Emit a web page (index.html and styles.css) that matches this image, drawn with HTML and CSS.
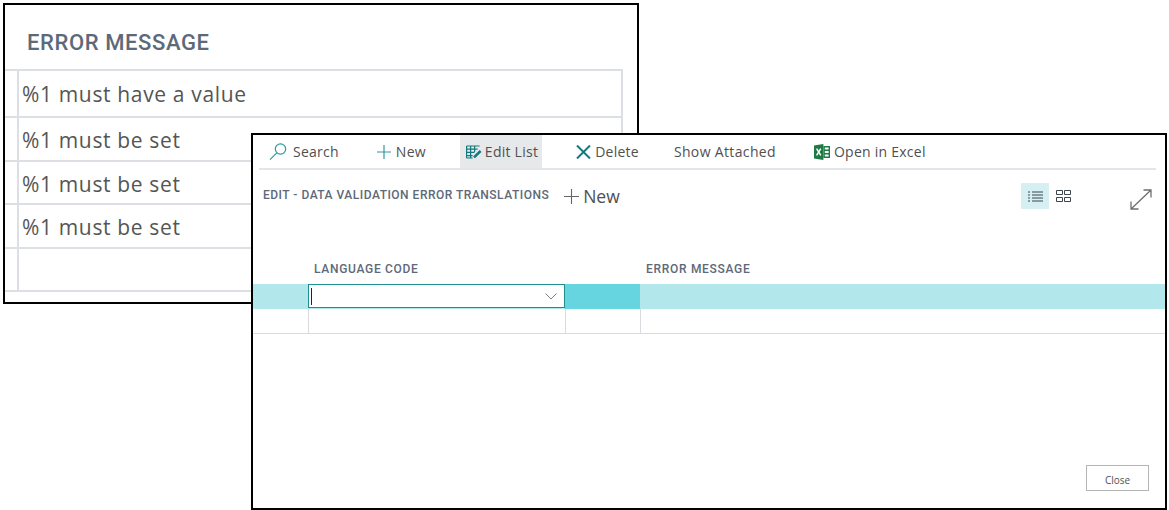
FILE: index.html
```html
<!DOCTYPE html>
<html lang="en">
<head>
    <meta charset="UTF-8">
    <title>Data Validation Error Translations</title>
    <link rel="stylesheet" href="styles.css">
</head>
<body>
    <section class="window back">
        <h2 class="back-title">ERROR MESSAGE</h2>
        <div class="back-table">
            <div class="back-row first">%1 must have a value</div>
            <div class="back-row">%1 must be set</div>
            <div class="back-row">%1 must be set</div>
            <div class="back-row">%1 must be set</div>
            <div class="back-row"></div>
        </div>
    </section>

    <section class="window front">
        <nav class="toolbar">
            <a class="tool tool-search">
                <svg width="19" height="19" viewBox="0 0 19 19" fill="none" stroke="#2f9a9c" stroke-width="1.2"><circle cx="11.5" cy="7" r="5.2"/><path d="M7.8 10.8 1 17.6"/></svg>
                <span>Search</span>
            </a>
            <a class="tool tool-new">
                <svg width="16" height="16" viewBox="0 0 16 16" fill="none" stroke="#2f9a9c" stroke-width="1.2"><path d="M8 1v14M1 8h14"/></svg>
                <span>New</span>
            </a>
            <a class="tool tool-edit">
                <svg width="16" height="14" viewBox="0 0 16 14" fill="none" stroke="#14787c" stroke-width="1.2"><path d="M.6 1h13M.6 4.2h11M.6 7.4h8M.6 10.6h6M.6 13h6M.6 1v12M4.6 1v12M8.6 1v6"/><path d="M8 12.4l6.6-6.4" stroke-width="2.6"/></svg>
                <span>Edit List</span>
            </a>
            <a class="tool tool-delete">
                <svg width="15" height="14" viewBox="0 0 15 14" fill="none" stroke="#14787c" stroke-width="2"><path d="M1 .5l13 13M14 .5l-13 13"/></svg>
                <span>Delete</span>
            </a>
            <a class="tool tool-attached"><span>Show Attached</span></a>
            <a class="tool tool-excel">
                <svg width="16" height="16" viewBox="0 0 16 16"><path d="M0 1.6 9.4 0v16L0 14.4z" fill="#1f7a45"/><path d="M9.4 2H16v12H9.4z" fill="#1f7a45"/><path d="M10.8 3.6h3.8v2h-3.800zM10.8 7h3.8v2h-3.800zM10.8 10.4h3.8v2h-3.800z" fill="#fff"/><path d="M2.6 4.6 6.8 11.4M6.8 4.6 2.6 11.4" stroke="#fff" stroke-width="1.5"/></svg>
                <span>Open in Excel</span>
            </a>
        </nav>

        <div class="titlebar">
            <h3 class="page-title">EDIT - DATA VALIDATION ERROR TRANSLATIONS</h3>
            <a class="title-new">
                <svg width="15" height="15" viewBox="0 0 15 15" fill="none" stroke="#666" stroke-width="1.1"><path d="M7.5 0v15M0 7.5h15"/></svg>
                <span>New</span>
            </a>
            <div class="view-switch">
                <span class="view-btn active">
                    <svg width="15" height="11" viewBox="0 0 15 11" fill="none" stroke="#3c4650"><path d="M0 1h2M4 1h11M0 4h2M4 4h11M0 7h2M4 7h11M0 10h2M4 10h11"/></svg>
                </span>
                <span class="view-btn">
                    <svg width="15" height="12" viewBox="0 0 15 12" fill="none" stroke="#3c4650"><path d="M.5.5h6v4h-6zM8.5.5h6v4h-6zM.5 7.5h6v4h-6zM8.5 7.5h6v4h-6z"/></svg>
                </span>
            </div>
            <svg class="expand" width="22" height="21" viewBox="0 0 22 21" fill="none" stroke="#6f6f6f" stroke-width="1.3"><path d="M1 20 21 1M13.500 1H21v7.500M1 12.500V20h7.500"/></svg>
        </div>

        <div class="grid">
            <div class="head"></div>
            <div class="head">LANGUAGE CODE</div>
            <div class="head"></div>
            <div class="head">ERROR MESSAGE</div>

            <div class="cell selected"></div>
            <div class="cell selected">
                <div class="combo">
                    <span class="caret"></span>
                    <svg width="12" height="7" viewBox="0 0 12 7" fill="none" stroke="#7d7d7d"><path d="M.5.5 6 6l5.500-5.500"/></svg>
                </div>
            </div>
            <div class="cell active"></div>
            <div class="cell selected"></div>

            <div class="cell"></div>
            <div class="cell divided"></div>
            <div class="cell divided"></div>
            <div class="cell divided"></div>
        </div>

        <div class="footer">
            <button class="close-btn">Close</button>
        </div>
    </section>
</body>
</html>
```

FILE: styles.css
```css
body {
    margin: 0;
    background-color: #fff;
    font-family: "Open Sans", sans-serif;
    color: #505050;
}

/* the two overlapping windows */
.window {
    position: absolute;
    box-sizing: border-box;
    background-color: #fff;
    border: 2px solid #000;
}

.back {
    left: 3px;
    top: 3px;
    width: 636px;
    height: 301px;
    overflow: hidden;
}

.front {
    left: 251px;
    top: 133px;
    width: 916px;
    height: 377px;
    display: flex;
    flex-direction: column;
}

.back-title {
    margin: 0;
    height: 64px;
    padding: 24px 0 0 22px;
    box-sizing: border-box;
    font-family: Roboto, sans-serif;
    font-size: 22px;
    font-weight: 500;
    letter-spacing: 0.6px;
    line-height: 27px;
    color: #5d6979;
}

.back-table {
    box-sizing: border-box;
    width: 618px;
    border-right: 2px solid #dcdfe3;
    border-top: 2px solid #dcdfe3;
}

.back-row {
    box-sizing: border-box;
    height: 43.5px;
    padding-left: 17px;
    border-bottom: 2px solid #dcdfe3;
    background: linear-gradient(#dcdfe3, #dcdfe3) 12px 0 / 2px 100% no-repeat;
    font-size: 21px;
    letter-spacing: 0.65px;
    line-height: 44px;
    color: #555;
}

.back-row.first {
    height: 47px;
    line-height: 46px;
}

/* toolbar */
.toolbar {
    display: flex;
    height: 33px;
    margin: 0 9px 0 6px;
    padding-left: 10px;
    border-bottom: 2px solid #e3e5ea;
    font-size: 14px;
    letter-spacing: 0.25px;
}

.tool {
    display: flex;
    align-items: center;
    white-space: nowrap;
}

.tool-search span { margin-left: 5px; }
.tool-new { margin-left: 37px; }
.tool-new span { margin-left: 4px; }

.tool-edit {
    margin-left: 34px;
    padding: 0 4px 0 6px;
    background-color: #e6e8ea;
}

.tool-edit span { margin-left: 3px; }
.tool-delete { margin-left: 34px; }
.tool-delete span { margin-left: 4px; }
.tool-attached { margin-left: 35px; letter-spacing: 0.35px; }
.tool-excel { margin-left: 38px; }
.tool-excel span { margin-left: 4px; }

/* page title row */
.titlebar {
    display: flex;
    align-items: flex-start;
    height: 71px;
    padding: 13px 13px 0 10px;
}

.page-title {
    margin: 0;
    padding-top: 5px;
    font-family: Roboto, sans-serif;
    font-size: 12px;
    font-weight: 500;
    letter-spacing: 0.5px;
    line-height: 14px;
    color: #5d6979;
    white-space: nowrap;
}

.title-new {
    display: flex;
    align-items: center;
    margin-left: 15px;
    padding-top: 2px;
    font-size: 17.5px;
    line-height: 22px;
    color: #505050;
}

.title-new span { margin-left: 4px; }

.view-switch {
    display: flex;
    margin-left: auto;
}

.view-btn {
    display: flex;
    align-items: center;
    justify-content: center;
    width: 28px;
    height: 26px;
}

.view-btn.active { background-color: #d5eff3; }

.expand {
    margin: 6px 0 0 53px;
}

/* list grid */
.grid {
    display: grid;
    grid-template-columns: 55px 257px 75px 1fr;
    grid-template-rows: 30px 25px 25px;
    font-family: Roboto, sans-serif;
}

.head {
    padding-left: 6px;
    font-size: 12px;
    font-weight: 500;
    letter-spacing: 0.7px;
    line-height: 30px;
    color: #5d6979;
}

.cell {
    box-sizing: border-box;
    border-bottom: 1px solid #d9dbe0;
}

.cell.selected { background-color: #b2e8ec; border-bottom: 0; }
.cell.active { background-color: #66d5df; border-bottom: 0; }
.cell.divided { border-left: 1px solid #d9dbe0; }

.combo {
    display: flex;
    align-items: center;
    justify-content: space-between;
    box-sizing: border-box;
    height: 24px;
    padding: 0 7px 0 2px;
    background-color: #fff;
    border: 1px solid #1d8f8f;
}

.caret {
    width: 1px;
    height: 17px;
    background-color: #222;
}

/* close button */
.footer {
    display: flex;
    justify-content: flex-end;
    margin-top: auto;
    padding: 0 16px 17px 0;
}

.close-btn {
    width: 63px;
    height: 26px;
    padding: 4px 0 0;
    background-color: #fff;
    border: 1px solid #b5b5b5;
    font-family: "Open Sans", sans-serif;
    font-size: 10px;
    color: #505050;
}
```
